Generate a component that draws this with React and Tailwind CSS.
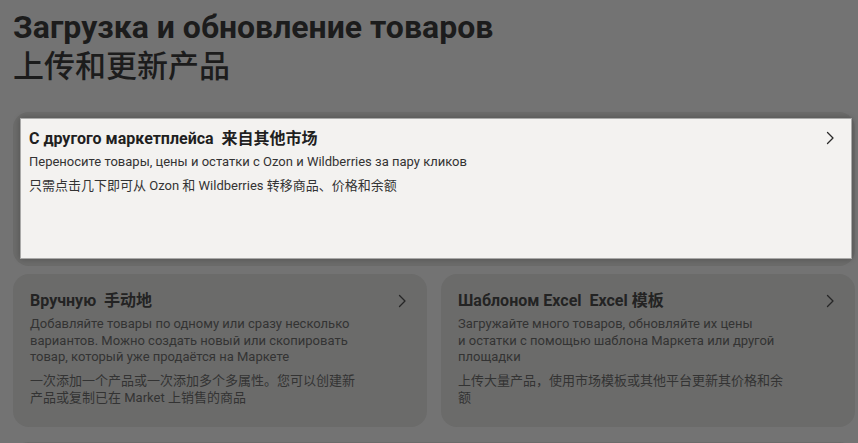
import React from "react";

const font = { fontFamily: 'Roboto, "Noto Sans CJK SC", sans-serif' };

function Chevron({ className = "" }) {
  return (
    <svg width="16" height="16" viewBox="0 0 16 16" fill="none" className={className}>
      <path d="M5.5 2.5 L11 8 L5.5 13.5" stroke="currentColor" strokeWidth="1.3" strokeLinecap="round" strokeLinejoin="round" />
    </svg>
  );
}

function DimCard({ title, ru, zh }) {
  return (
    <div className="flex-1 rounded-[16px] bg-[#6b6b6a] pl-[17px] pr-[17px] pt-[16px] h-[153px]">
      <div className="flex items-start justify-between">
        <div className="text-[16px] leading-[22px] font-bold text-[#232323] whitespace-pre">{title}</div>
        <Chevron className="text-[#262626] mt-[3px]" />
      </div>
      <div className="mt-[4px] w-[330px] text-[13px] leading-[16.5px] text-[#333333]">{ru}</div>
      <div className="mt-[6px] w-[330px] text-[13px] leading-[17px] text-[#333333]">{zh}</div>
    </div>
  );
}

export default function App() {
  return (
    <div className="w-[858px] h-[443px] overflow-hidden bg-[#737373]" style={font}>
      <div className="pl-[13px] pr-[3px] pt-[7px]">
        <h1 className="text-[32px] leading-[40px] font-bold text-[#1c1c1c]">
          Загрузка и обновление товаров
        </h1>
        <div className="text-[31px] leading-[40px] font-medium text-[#1c1c1c]">上传和更新产品</div>

        <div className="mt-[25px] rounded-[16px] bg-[#6b6b6a] pl-[7px] pr-[3px] pt-[6px] pb-[7px]">
          <div className="bg-[#f3f2f0] border border-[#a9a9a8] h-[141px] pl-[8px] pr-[13px] pt-[9px] shadow-[0_0_6px_rgba(0,0,0,0.25)]">
            <div className="flex items-start justify-between">
              <div className="text-[16px] leading-[22px] font-bold text-[#1f1f1f] whitespace-pre">
                С другого маркетплейса  来自其他市场
              </div>
              <Chevron className="text-[#2a2a2a] mt-[2px]" />
            </div>
            <div className="mt-[3px] text-[13px] leading-[17px] text-[#333333]">
              Переносите товары, цены и остатки с Ozon и Wildberries за пару кликов
            </div>
            <div className="mt-[7px] text-[13px] leading-[17px] text-[#333333]">
              只需点击几下即可从 Ozon 和 Wildberries 转移商品、价格和余额
            </div>
          </div>
        </div>

        <div className="mt-[8px] flex gap-[14px]">
          <DimCard
            title="Вручную  手动地"
            ru={"Добавляйте товары по\u00a0одному или сразу несколько вариантов. Можно создать новый или скопировать товар, который уже продаётся на\u00a0Маркете"}
            zh="一次添加一个产品或一次添加多个多属性。您可以创建新产品或复制已在 Market 上销售的商品"
          />
          <DimCard
            title="Шаблоном Excel  Excel 模板"
            ru={"Загружайте много товаров, обновляйте их цены и\u00a0остатки с\u00a0помощью шаблона Маркета или другой площадки"}
            zh="上传大量产品，使用市场模板或其他平台更新其价格和余额"
          />
        </div>
        <div className="mt-[15px] h-[40px] rounded-[16px] bg-[#6b6b6a]" />
      </div>
    </div>
  );
}
